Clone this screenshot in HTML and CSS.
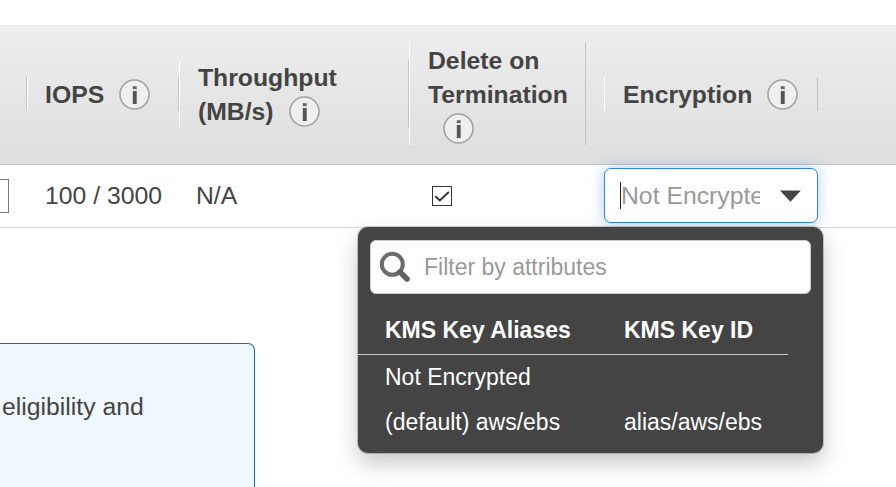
FILE: index.html
```html
<!DOCTYPE html>
<html lang="en">
<head>
<meta charset="utf-8">
<title>Storage volumes</title>
<link rel="stylesheet" href="styles.css">
</head>
<body>
<svg class="defs" width="0" height="0">
  <symbol id="info" viewBox="0 0 31 31">
    <circle cx="15.5" cy="15.5" r="14.5" fill="#efefef" stroke="#a2a2a2" stroke-width="1.6"/>
    <rect x="13.8" y="7.2" width="3.9" height="3" fill="#666"/>
    <rect x="13.8" y="12" width="3.9" height="13" fill="#555"/>
  </symbol>
</svg>
<header class="head">
  <div class="cell stub"></div>
  <div class="cell iops">IOPS<svg class="info"><use href="#info"/></svg></div>
  <div class="cell throughput">Throughput (MB/s)<svg class="info"><use href="#info"/></svg></div>
  <div class="cell delete">Delete on Termination <svg class="info"><use href="#info"/></svg></div>
  <div class="cell encryption">Encryption<svg class="info"><use href="#info"/></svg></div>
</header>
<main>
  <section class="volume">
    <div class="size-input"></div>
    <div class="val-iops">100 / 3000</div>
    <div class="val-throughput">N/A</div>
    <div class="val-delete">
      <div class="check"><svg width="18" height="18" viewBox="0 0 18 18"><path d="M2.3 9.3 L6.8 13.5 L15.8 5" fill="none" stroke="#333" stroke-width="1.9"/></svg></div>
    </div>
    <div class="select">
      <span class="caret"></span>
      <span class="select-text">Not Encrypted</span>
      <svg class="arrow" width="21" height="12" viewBox="0 0 21 12"><path d="M0 .5H21L10.5 11.7Z" fill="#444"/></svg>
    </div>
  </section>
  <aside class="notice">eligibility and</aside>
</main>
<div class="popup">
  <div class="search">
    <svg width="32" height="32" viewBox="0 0 32 32"><circle cx="13.3" cy="13.3" r="10.5" fill="none" stroke="#6c6c6c" stroke-width="4"/><path d="M21 21L28 28" stroke="#606060" stroke-width="5.6" stroke-linecap="round"/></svg>
    <span>Filter by attributes</span>
  </div>
  <div class="keys keys-head"><span>KMS Key Aliases</span><span>KMS Key ID</span></div>
  <div class="keys"><span>Not Encrypted</span><span></span></div>
  <div class="keys"><span>(default) aws/ebs</span><span>alias/aws/ebs</span></div>
</div>
</body>
</html>
```

FILE: styles.css
```css
* { box-sizing: border-box; }
body {
  margin: 0;
  padding-top: 25px;
  height: 487px;
  overflow: hidden;
  position: relative;
  background: #fff;
  color: #444;
  font: 24.75px/34px "Liberation Sans", Arial, sans-serif;
}
.defs { position: absolute; }
.head {
  display: flex;
  align-items: center;
  height: 140px;
  padding-bottom: 1px;
  border-bottom: 1px solid #c6c6c6;
  background: linear-gradient(#eee, #dedede);
  font-weight: bold;
}
.cell {
  flex: none;
  height: 34px;
  padding: 1px 0 0 18px;
  border-left: 1px solid #fff;
  border-right: 1px solid #c4c4c4;
}
.stub { width: 27px; padding: 0; border-left: 0; }
.iops { width: 152px; padding-left: 17px; }
.throughput { width: 230px; height: 68px; padding-right: 50px; }
.delete { width: 177px; height: 102px; }
.encryption { width: 214px; margin-left: 18px; }
.info {
  width: 31px;
  height: 31px;
  margin: -6px 0 -6px 15px;
  vertical-align: -1px;
}
.volume {
  display: flex;
  align-items: center;
  height: 63px;
  border-bottom: 1px solid #ddd;
}
.size-input {
  width: 9px;
  height: 34px;
  margin-right: 36px;
  border: 1px solid #777;
  border-left: 0;
}
.val-iops { width: 151px; }
.val-throughput { width: 236px; }
.val-delete { width: 172px; }
.check {
  width: 20px;
  height: 20px;
  border: 1px solid #333;
}
.check svg { display: block; }
.select {
  display: flex;
  align-items: center;
  width: 214px;
  height: 55px;
  margin-bottom: 2px;
  padding: 1px 16px 0 15px;
  border: 1px solid #3184d8;
  border-radius: 7px;
  background: #fff;
  box-shadow: 0 0 14px rgba(49, 132, 216, .4);
}
.caret { width: 1px; height: 27px; background: #222; }
.select-text {
  width: 140px;
  margin-right: 20px;
  overflow: hidden;
  white-space: nowrap;
  color: #999;
}
.notice {
  width: 255px;
  height: 160px;
  margin-top: 115px;
  padding: 46px 0 0 2px;
  border: 1px solid #146eb4;
  border-left: 0;
  border-radius: 0 7px 0 0;
  background: #f0f8ff;
}
.popup {
  position: absolute;
  left: 358px;
  top: 227px;
  width: 465px;
  height: 226px;
  padding-top: 13px;
  border-radius: 10px;
  background: #444;
  color: #fff;
  font-size: 23px;
  box-shadow: 0 0 0 1px rgba(0, 0, 0, .2), 0 10px 22px rgba(0, 0, 0, .22);
}
.search {
  display: flex;
  align-items: center;
  width: 441px;
  height: 54px;
  margin: 0 0 15px 12px;
  padding-left: 8px;
  gap: 13px;
  border: 1px solid #ccc;
  border-radius: 6px;
  background: #fff;
  color: #999;
}
.keys {
  display: grid;
  grid-template-columns: 239px 1fr;
  width: 430px;
  height: 45px;
  padding-left: 27px;
  line-height: 45px;
}
.keys-head {
  height: 46px;
  border-bottom: 1px solid #ccc;
  line-height: 43px;
  font-weight: bold;
}
```
